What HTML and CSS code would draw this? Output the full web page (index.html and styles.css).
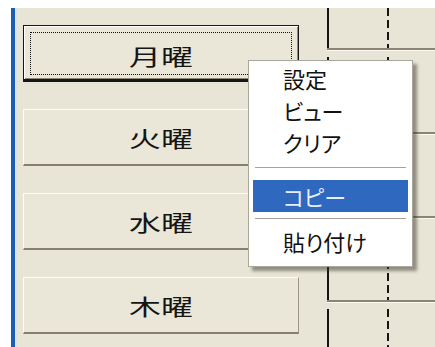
FILE: index.html
```html
<!DOCTYPE html>
<html lang="ja">
<head>
    <meta charset="UTF-8">
    <meta name="viewport" content="width=device-width, initial-scale=1.0">
    <title>曜日</title>
    <link rel="stylesheet" href="styles.css">
</head>
<body>
    <div class="window">
        <div class="days">
            <div class="day day-focus"><span class="day-label">月曜</span></div>
            <div class="day"><span class="day-label">火曜</span></div>
            <div class="day"><span class="day-label">水曜</span></div>
            <div class="day"><span class="day-label">木曜</span></div>
        </div>

        <div class="lanes">
            <div class="lane lane-first"><div class="lane-body"><div class="lane-dash"></div></div></div>
            <div class="lane"><div class="lane-body"><div class="lane-dash"></div></div></div>
            <div class="lane"><div class="lane-body"><div class="lane-dash"></div></div></div>
            <div class="lane"><div class="lane-body"><div class="lane-dash"></div></div></div>
            <div class="lane"><div class="lane-body"><div class="lane-dash"></div></div></div>
        </div>
    </div>

    <!-- コンテキストメニュー -->
    <ul class="menu">
        <li class="menu-item">設定</li>
        <li class="menu-item">ビュー</li>
        <li class="menu-item">クリア</li>
        <li class="menu-sep"></li>
        <li class="menu-item is-active">コピー</li>
        <li class="menu-sep menu-sep-small"></li>
        <li class="menu-item">貼り付け</li>
    </ul>
</body>
</html>
```

FILE: styles.css
```css
/* Общие стили */
body {
    margin: 0;
    height: 347px;
    overflow: hidden;
    background-color: #fff;
    font-family: "Noto Sans CJK JP", sans-serif;
}

/* Окно с синей рамкой слева */
.window {
    display: flex;
    height: 339px;
    margin: 8px 0 0 11px;
    border-left: 4px solid #1d5db4;
    background-color: #e8e5d6;
    box-shadow: inset 2px 0 #dbe3e4;
}

/* Кнопки дней */
.days {
    display: flex;
    flex-direction: column;
    gap: 27px;
    width: 276px;
    padding: 17px 0 0 8px;
    flex: none;
}

.day {
    display: flex;
    align-items: center;
    justify-content: center;
    height: 57px;
    box-sizing: border-box;
    background-color: #eae7d9;
    border-top: 1px solid #fdfcf6;
    border-left: 1px solid #fdfcf6;
    border-right: 1px solid #9a9584;
    border-bottom: 2px solid #85806f;
}

.day-focus {
    padding-top: 4px;
    border: 1px solid #161616;
    border-bottom-width: 3px;
    box-shadow: inset 1px 1px #fff, inset -1px -1px #8d8878;
    outline: 1px dotted #111;
    outline-offset: -8px;
}

.day-label {
    display: inline-block;
    font-size: 22px;
    color: #151515;
    transform: scaleX(1.45);
}

/* Правая часть с линиями */
.lanes {
    display: flex;
    flex-direction: column;
    flex: 1;
    margin-left: 28px;
    overflow: hidden;
}

.lane {
    display: flex;
    flex-direction: column;
    flex: none;
    height: 84px;
    box-sizing: border-box;
    border-bottom: 2px solid #8a8474;
    box-shadow: inset 0 1px #fbf9f0;
}

.lane-first {
    height: 42px;
    box-shadow: none;
}

.lane-body {
    flex: 1;
    margin-top: 7px;
    padding-left: 58px;
    border-left: 2px solid #141414;
}

.lane-first .lane-body {
    margin-top: 0;
}

.lane-dash {
    width: 2px;
    height: 100%;
    background: repeating-linear-gradient(to bottom, #161616 0 8px, transparent 8px 12px);
}

/* Контекстное меню */
.menu {
    position: absolute;
    left: 248px;
    top: 60px;
    width: 165px;
    height: 207px;
    box-sizing: border-box;
    margin: 0;
    padding: 1px 4px 0;
    list-style: none;
    background-color: #fff;
    border: 1px solid #a9a79c;
    box-shadow: 4px 4px 3px rgba(60, 55, 45, 0.5);
    font-size: 22px;
    font-feature-settings: "palt";
}

.menu-item {
    height: 32px;
    line-height: 32px;
    padding-left: 30px;
    color: #111;
}

.menu-item.is-active {
    background-color: #2f68bf;
    color: #e6eefb;
}

.menu-sep {
    height: 1px;
    margin: 9px 2px 12px;
    background-color: #a6a49a;
}

.menu-sep-small {
    margin: 6px 2px 6px;
}
```
